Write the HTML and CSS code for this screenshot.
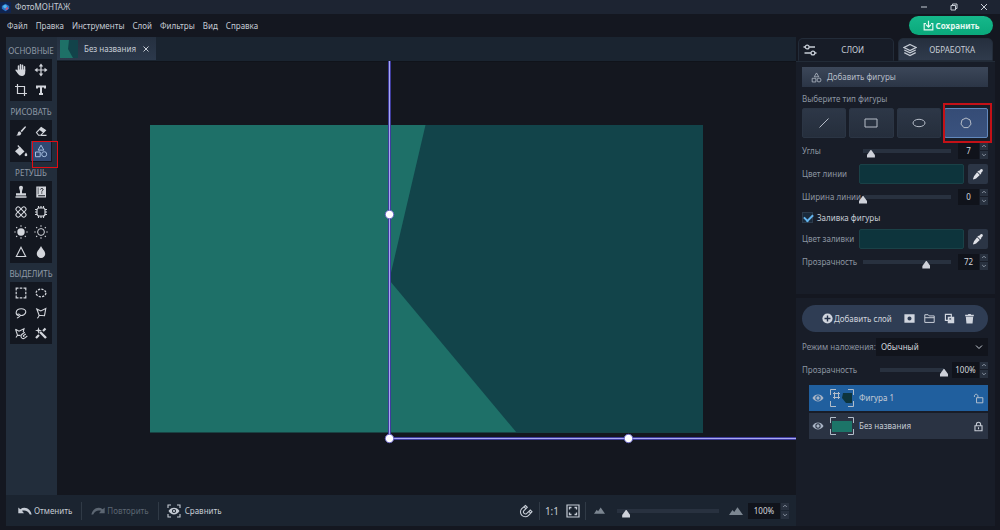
FILE: index.html
```html
<!DOCTYPE html>
<html lang="ru">
<head>
<meta charset="utf-8">
<title>ФотоМОНТАЖ</title>
<link rel="stylesheet" href="styles.css">
</head>
<body>
<svg class="sprite" aria-hidden="true">
  <symbol id="hand" viewBox="0 0 14 14"><g fill="none" stroke="currentColor" stroke-width="1.5" stroke-linecap="round"><path d="M4.5 8V3M6.5 7V1.8M8.5 7V2.2M10.5 8V3.8M4.3 9.8L2.2 7.2"/></g><path fill="currentColor" d="M3.8 6.5h7.4v3c0 2-1.2 3.5-3.2 3.5S4.5 12 3 9z"/></symbol>
  <symbol id="move" viewBox="0 0 14 14"><path d="M7 2v10M2 7h10" stroke="currentColor" stroke-width="1.2"/><path fill="currentColor" d="M7 .5L9.2 3.5H4.8zM7 13.5L4.8 10.5h4.4zM.5 7L3.5 4.8v4.4zM13.5 7l-3 2.2V4.8z"/></symbol>
  <symbol id="crop" viewBox="0 0 14 14"><path d="M3.5 1v9.5H13M1 3.5h9.5V13" fill="none" stroke="currentColor" stroke-width="1.2"/></symbol>
  <symbol id="type" viewBox="0 0 14 14"><path d="M3 5.500V3.500h8v2M7 3.500v7.500M5 11h4" fill="none" stroke="currentColor" stroke-width="2"/></symbol>
  <symbol id="brush" viewBox="0 0 14 14"><path fill="currentColor" d="M11.5 2.2c.8.5.3 1.3-.2 1.9L7.8 8.2 6.5 7l4-4.2c.4-.4.7-.7 1-.6zM5.8 7.5l1.5 1.4c0 2-2 3.1-5 2.5 1.5-.7 1.3-1.6 1.6-2.6.3-.9 1.1-1.4 1.9-1.3z"/></symbol>
  <symbol id="eraser" viewBox="0 0 14 14"><path d="M2.5 8.5l4.7-5 4.3 2.8-4.8 5H4.6zM7 11.4h5.5" fill="none" stroke="currentColor" stroke-width="1.1"/><path fill="currentColor" d="M5.2 5.8l2-2.3 4.3 2.8-2.2 2.4z"/></symbol>
  <symbol id="bucket" viewBox="0 0 14 14"><path fill="currentColor" d="M1 7.2l5-4.4 4.5 4.6-4.7 4.4z"/><path d="M6 4L3.8 1.5" stroke="currentColor" stroke-width="1.2"/><path fill="currentColor" d="M12 8.5c.8 1.3 1.3 1.9 1.3 2.7a1.4 1.4 0 0 1-2.7 0c0-.8.6-1.4 1.4-2.7z"/></symbol>
  <symbol id="shapes" viewBox="0 0 14 14"><g fill="none" stroke="currentColor"><path d="M7 1.2l2.9 4.9H4.1zM1.5 8h4.7v4.7H1.5z"/><circle cx="10.2" cy="10.2" r="2.5"/></g></symbol>
  <symbol id="stamp" viewBox="0 0 14 14"><path fill="currentColor" d="M5 2.7a2 2 0 0 1 4 0L8 6.2v2h4v2.3H2V8.2h4v-2zM1.5 11.3h11v1.4h-11z"/></symbol>
  <symbol id="book" viewBox="0 0 14 14"><path fill="currentColor" fill-rule="evenodd" d="M2.300 1.500h9.700v11H2.300zM4.200 10.300v1h6.800v-1zM3.800 2.500v6.800h.6V2.500z"/><path d="M6.400 4.500c.3-1.500 3-1.200 2.700.2-.1.800-1.300.7-1.300 1.900M7.800 7.400v1.200" fill="none" stroke="#131720"/></symbol>
  <symbol id="patch" viewBox="0 0 14 14"><g fill="none" stroke="currentColor"><rect x=".8" y="4.800" width="12.400" height="4.400" rx="2.200" transform="rotate(45 7 7)"/><rect x=".8" y="4.800" width="12.400" height="4.400" rx="2.200" transform="rotate(-45 7 7)"/></g></symbol>
  <symbol id="chip" viewBox="0 0 14 14"><rect x="3" y="3" width="8" height="8" rx="2" fill="none" stroke="currentColor" stroke-width="1.200"/><path d="M4.500 1v2M7 1v2M9.500 1v2M4.500 11v2M7 11v2M9.500 11v2M1 4.500h2M1 7h2M1 9.500h2M11 4.500h2M11 7h2M11 9.500h2" stroke="currentColor" stroke-width="1.200"/></symbol>
  <symbol id="sun" viewBox="0 0 14 14"><circle cx="7" cy="7" r="3.7" fill="currentColor"/><path d="M7 .3v1.4M7 12.3v1.4M.3 7h1.4M12.3 7h1.4M2.2 2.2l1 1M10.8 10.8l1 1M2.2 11.8l1-1M10.8 3.2l1-1" stroke="currentColor" stroke-width="1.1"/></symbol>
  <symbol id="sun-line" viewBox="0 0 14 14"><circle cx="7" cy="7" r="3.4" fill="none" stroke="currentColor"/><path d="M7 .3v1.4M7 12.3v1.4M.3 7h1.4M12.3 7h1.4M2.2 2.2l1 1M10.8 10.8l1 1M2.2 11.8l1-1M10.8 3.2l1-1" stroke="currentColor" stroke-width="1.1"/></symbol>
  <symbol id="triangle" viewBox="0 0 14 14"><path d="M7 2.3l4.7 9.2H2.3z" fill="none" stroke="currentColor" stroke-width="1.1"/></symbol>
  <symbol id="drop" viewBox="0 0 14 14"><path fill="currentColor" d="M7 1c1.2 3 4.2 4.8 4.2 7.8A4.2 4.2 0 0 1 7 13a4.2 4.2 0 0 1-4.2-4.2C2.8 5.8 5.800 4 7 1z"/></symbol>
  <symbol id="marquee" viewBox="0 0 14 14"><path d="M2.200 4.500V2.200h2.300M9.500 2.200h2.300v2.300M11.800 9.500v2.300H9.500M4.500 11.800H2.200V9.500M5.700 2.200h2.600M5.700 11.800h2.600M2.200 5.700v2.600M11.800 5.700v2.600" fill="none" stroke="currentColor" stroke-width="1.200"/></symbol>
  <symbol id="ellipse-select" viewBox="0 0 14 14"><ellipse cx="7" cy="7" rx="4.900" ry="3.800" fill="none" stroke="currentColor" stroke-width="1.300" stroke-dasharray="2.200 1.200"/></symbol>
  <symbol id="lasso" viewBox="0 0 14 14"><path d="M5 9.500C3 9.200 2 7.900 2.200 6.200 2.500 4 4.700 2.700 7.300 2.700s4.600 1.300 4.500 3.200c-.1 2.300-3 4-5.600 3.500M3.500 8.300c1.500-.9 3.300.4 2.500 1.800-.6 1-2 .6-2.900 2.200" fill="none" stroke="currentColor" stroke-width="1.100"/></symbol>
  <symbol id="poly-lasso" viewBox="0 0 14 14"><path d="M2.800 3l4 2 5-2.500-1.300 7.200-5.400-.5zM5.100 9.200c-.2 1.500-1 2.500-1.800 3" fill="none" stroke="currentColor" stroke-width="1.100"/></symbol>
  <symbol id="magnet-lasso" viewBox="0 0 14 14"><path d="M1.500 3.200l3.500 2 5-2.500-.8 3.500M1.500 3.200l2 6 3 .2M3.500 9.200L2 11.500" fill="none" stroke="currentColor" stroke-width="1.100"/><path d="M10.800 6.300L8 8.300a2.300 2.300 0 0 0 2.600 3.800l2.700-2.100M11.800 8l-2.300 1.600a.7.7 0 0 0 .8 1" fill="none" stroke="currentColor" stroke-width="1.100"/></symbol>
  <symbol id="wand" viewBox="0 0 14 14"><path d="M6 6l6 6" stroke="currentColor" stroke-width="2.400"/><path d="M2 12l3-3M9 5l2.500-2.500" stroke="currentColor" stroke-width="2.200"/><path fill="currentColor" d="M4.500 1l.8 2.700L8 4.500l-2.700.8L4.500 8l-.8-2.700L1 4.500l2.700-.8z"/></symbol>
  <symbol id="settings" viewBox="0 0 14 14"><g fill="none" stroke="currentColor" stroke-width="1.300"><circle cx="4.200" cy="4" r="1.900"/><path d="M6.100 4H12M.5 4h1.800M1.500 10H8M11.800 10h1.700"/><circle cx="9.900" cy="10" r="1.900"/></g></symbol>
  <symbol id="layers" viewBox="0 0 14 14"><path d="M7 1.500l6 3-6 3-6-3zM1.300 7L7 9.900 12.700 7M1.300 9.600L7 12.500l5.700-2.900" fill="none" stroke="currentColor" stroke-width="1.200"/></symbol>
  <symbol id="save" viewBox="0 0 14 14"><path d="M7 1v7.500M4 6l3 3 3-3M3.800 4.500H1.500v8h11v-8h-2.300" fill="none" stroke="currentColor" stroke-width="1.500"/></symbol>
  <symbol id="picker" viewBox="0 0 14 14"><path fill="currentColor" d="M9.200 2.700c1.300-1.900 3.700.2 2.200 1.800L10 6l.3.700-.9.900-3-3 .9-.9.700.2zM6.100 5.300l2.700 2.700-3.700 3.500-2.600 1-.5-.5 1-2.800z"/></symbol>
  <symbol id="plus" viewBox="0 0 14 14"><circle cx="7" cy="7" r="6.500" fill="currentColor"/><path d="M7 3.200v7.600M3.200 7h7.600" stroke="#243149" stroke-width="1.800"/></symbol>
  <symbol id="mask" viewBox="0 0 14 14"><path fill="currentColor" fill-rule="evenodd" d="M.5 1.500h13v11H.5zM7 4.500a2.600 2.600 0 1 0 0 5.200 2.600 2.600 0 0 0 0-5.200z"/></symbol>
  <symbol id="folder" viewBox="0 0 14 14"><path d="M1 12V2.200h4.300l1.300 1.500H13V12zM1 6h12" fill="none" stroke="currentColor" stroke-width="1.200"/></symbol>
  <symbol id="copy" viewBox="0 0 14 14"><path d="M1.800 1.800h7.500v7.500H1.800z" fill="none" stroke="currentColor" stroke-width="1.500"/><path fill="currentColor" fill-rule="evenodd" d="M4.800 4.800H13V13H4.800zM7 6.500v3h3v-3z"/></symbol>
  <symbol id="trash" viewBox="0 0 14 14"><path fill="currentColor" d="M1.500 2.300H5l.5-1h3l.5 1h3.500V4h-11zM2.300 4.800h9.400l-.8 8.500H3.100z"/></symbol>
  <symbol id="eye" viewBox="0 0 14 14"><path fill="currentColor" fill-rule="evenodd" d="M.5 7C3.700 1.600 10.300 1.600 13.500 7 10.300 12.400 3.700 12.400.5 7zM7 3.900a3.100 3.100 0 1 0 0 6.200 3.100 3.100 0 0 0 0-6.200z"/><circle cx="7" cy="7" r="1.900" fill="currentColor"/></symbol>
  <symbol id="unlock" viewBox="0 0 14 14"><path d="M4.500 6h8v6.500h-8zM6.300 6V4C6 .9 2.200.9 1.800 3.700V5" fill="none" stroke="currentColor" stroke-width="1.100"/></symbol>
  <symbol id="lock" viewBox="0 0 14 14"><path d="M2.500 6h9v6.500h-9zM4.300 6V4.300C4.300.6 9.700.6 9.700 4.300V6M7 8v2.500" fill="none" stroke="currentColor" stroke-width="1.400"/></symbol>
  <symbol id="undo" viewBox="0 0 14 14"><path fill="currentColor" d="M.3 3.500l2 1.700c3.900-2.900 9.700-1.400 11.400 5.300h-1.900C10.300 6.700 6.600 5.700 4 6.800L6 9.200H.3z"/></symbol>
  <symbol id="compare" viewBox="0 0 14 14"><path d="M1 4V1h3M10 1h3v3M13 10v3h-3M4 13H1v-3" fill="none" stroke="currentColor" stroke-width="1.100"/><path fill="currentColor" fill-rule="evenodd" d="M1.500 7c2.700-4.500 8.300-4.500 11 0-2.700 4.500-8.300 4.500-11 0zM7 4.900a2.100 2.100 0 1 0 0 4.200 2.100 2.100 0 0 0 0-4.200z"/><circle cx="7" cy="7" r="1.100" fill="currentColor"/></symbol>
  <symbol id="magnet" viewBox="0 0 14 14"><path d="M6.500 1.500L2.800 4.700A4.700 4.700 0 0 0 9.600 11.300L13 7.700 11.300 6 7.800 9.300A1.900 1.900 0 0 1 5 6.700L8.300 3.300zM5.100 2.800L6.900 4.700M9.900 7.300l1.800 1.800" fill="none" stroke="currentColor" stroke-width="1.100"/></symbol>
  <symbol id="fit" viewBox="0 0 14 14"><path d="M1 1h12v12H1z" fill="none" stroke="currentColor" stroke-width="1.200"/><path d="M3.500 5.500v-2h2M8.500 3.500h2v2M10.500 8.500v2h-2M5.500 10.500h-2v-2" fill="none" stroke="currentColor" stroke-width="1.300"/></symbol>
  <symbol id="mountain" viewBox="0 0 14 14"><path fill="currentColor" d="M0 11l3.500-5 1.700 2L8.500 3.200 14 11z"/></symbol>
  <symbol id="chev-up" viewBox="0 0 8 6"><path d="M2.200 4L4 2.200 5.800 4" fill="none" stroke="currentColor"/></symbol>
  <symbol id="chev-down" viewBox="0 0 8 6"><path d="M2.200 2L4 3.800 5.800 2" fill="none" stroke="currentColor"/></symbol>
</svg>

<div class="app">
  <header class="titlebar">
    <svg class="logo" viewBox="0 0 12 12"><rect width="12" height="12" fill="#102450"/><path fill="#2874c9" d="M6 2l4 2.300v3L6 10 2 7.300v-3z"/><circle cx="5.500" cy="5" r="2" fill="#54b8ef"/><path fill="#c2597e" d="M6 6.500l2.500-1 .5 2L6.500 9z"/></svg>
    <span class="app-name">ФотоМОНТАЖ</span>
    <div class="window-buttons">
      <button aria-label="Свернуть"><svg viewBox="0 0 8 8"><path d="M1 4h6"/></svg></button>
      <button aria-label="Развернуть"><svg viewBox="0 0 8 8"><path d="M1 2.500h4.500v4.500H1zM2.500 2.500V1H7v4.500H5.500"/></svg></button>
      <button aria-label="Закрыть"><svg viewBox="0 0 8 8"><path d="M1 1l6 6M7 1L1 7"/></svg></button>
    </div>
  </header>

  <div class="menubar">
    <nav class="menu">
      <button>Файл</button><button>Правка</button><button>Инструменты</button><button>Слой</button><button>Фильтры</button><button>Вид</button><button>Справка</button>
    </nav>
    <button class="save"><svg class="icon small"><use href="#save"/></svg>Сохранить</button>
  </div>

  <div class="workspace">
    <main class="editor">
      <aside class="tools">
        <h2>ОСНОВНЫЕ</h2>
        <div class="tool-group">
          <button aria-label="Рука"><svg class="icon"><use href="#hand"/></svg></button>
          <button aria-label="Перемещение"><svg class="icon"><use href="#move"/></svg></button>
          <button aria-label="Кадрирование"><svg class="icon"><use href="#crop"/></svg></button>
          <button aria-label="Текст"><svg class="icon"><use href="#type"/></svg></button>
        </div>
        <h2>РИСОВАТЬ</h2>
        <div class="tool-group">
          <button aria-label="Кисть"><svg class="icon"><use href="#brush"/></svg></button>
          <button aria-label="Ластик"><svg class="icon"><use href="#eraser"/></svg></button>
          <button aria-label="Заливка"><svg class="icon"><use href="#bucket"/></svg></button>
          <button class="active highlighted" aria-label="Фигуры"><svg class="icon"><use href="#shapes"/></svg></button>
        </div>
        <h2>РЕТУШЬ</h2>
        <div class="tool-group">
          <button aria-label="Штамп"><svg class="icon"><use href="#stamp"/></svg></button>
          <button aria-label="Архивная кисть"><svg class="icon"><use href="#book"/></svg></button>
          <button aria-label="Лечащая кисть"><svg class="icon"><use href="#patch"/></svg></button>
          <button aria-label="Заплатка"><svg class="icon"><use href="#chip"/></svg></button>
          <button aria-label="Осветлить"><svg class="icon"><use href="#sun"/></svg></button>
          <button aria-label="Затемнить"><svg class="icon"><use href="#sun-line"/></svg></button>
          <button aria-label="Резкость"><svg class="icon"><use href="#triangle"/></svg></button>
          <button aria-label="Размытие"><svg class="icon"><use href="#drop"/></svg></button>
        </div>
        <h2>ВЫДЕЛИТЬ</h2>
        <div class="tool-group">
          <button aria-label="Прямоугольник"><svg class="icon"><use href="#marquee"/></svg></button>
          <button aria-label="Эллипс"><svg class="icon"><use href="#ellipse-select"/></svg></button>
          <button aria-label="Лассо"><svg class="icon"><use href="#lasso"/></svg></button>
          <button aria-label="Многоугольное лассо"><svg class="icon"><use href="#poly-lasso"/></svg></button>
          <button aria-label="Магнитное лассо"><svg class="icon"><use href="#magnet-lasso"/></svg></button>
          <button aria-label="Волшебная палочка"><svg class="icon"><use href="#wand"/></svg></button>
        </div>
      </aside>

      <section class="document">
        <div class="doc-tabs">
          <div class="doc-tab">
            <svg class="doc-thumb" viewBox="0 0 18 18" preserveAspectRatio="none"><path fill="#1e7067" d="M0 0h18v18H0z"/><path fill="#12434a" d="M9 0h9v18h-5L8 9z"/></svg>
            <span>Без названия</span>
            <button aria-label="Закрыть вкладку"><svg viewBox="0 0 8 8"><path d="M1.500 1.500l5 5M6.500 1.500l-5 5"/></svg></button>
          </div>
        </div>
        <div class="canvas">
          <svg viewBox="0 0 739 434" preserveAspectRatio="xMidYMid slice" role="img" aria-label="Холст">
            <rect x="93" y="64" width="553" height="307.500" fill="#1e7068"/>
            <path fill="#12444a" d="M368.500 64H646v307.500H459.500L333 220v-4z"/>
            <path class="frame-edge" d="M332.500 0v377.500H739"/>
            <path class="frame" d="M332.500 0v377.500H739"/>
            <g class="handles"><circle cx="332.500" cy="153.500" r="4.200"/><circle cx="332.500" cy="377.500" r="4.200"/><circle cx="571.500" cy="377.500" r="4.200"/></g>
          </svg>
        </div>
      </section>

      <footer class="statusbar">
        <div class="history">
          <button><svg class="icon"><use href="#undo"/></svg>Отменить</button>
          <button disabled><svg class="icon mirrored"><use href="#undo"/></svg>Повторить</button>
          <button class="compare"><svg class="icon"><use href="#compare"/></svg>Сравнить</button>
        </div>
        <div class="zoom">
          <button class="snap" aria-label="Привязка"><svg class="icon"><use href="#magnet"/></svg></button>
          <div class="scale">
            <button class="ratio">1:1</button>
            <button aria-label="Вписать"><svg class="icon"><use href="#fit"/></svg></button>
          </div>
          <svg class="icon small dim"><use href="#mountain"/></svg>
          <input class="slider" type="range" min="0" max="100" value="9" aria-label="Масштаб">
          <svg class="icon dim"><use href="#mountain"/></svg>
          <span class="stepper"><input type="text" value="100%" aria-label="Масштаб, проценты"><span class="steps"><button aria-label="Больше"><svg><use href="#chev-up"/></svg></button><button aria-label="Меньше"><svg><use href="#chev-down"/></svg></button></span></span>
        </div>
      </footer>
    </main>

    <aside class="side">
      <div class="side-tabs">
        <button class="current"><svg class="icon"><use href="#settings"/></svg><span>СЛОИ</span></button>
        <button><svg class="icon"><use href="#layers"/></svg><span>ОБРАБОТКА</span></button>
      </div>

      <section class="panel shape-panel">
        <div class="add-shape"><svg class="icon small"><use href="#shapes"/></svg>Добавить фигуры</div>
        <p class="caption">Выберите тип фигуры</p>
        <div class="shape-types">
          <button aria-label="Линия"><svg viewBox="0 0 16 12"><path d="M3.500 10.500l9-9"/></svg></button>
          <button aria-label="Прямоугольник"><svg viewBox="0 0 16 12"><path d="M2 2h12v8H2z"/></svg></button>
          <button aria-label="Эллипс"><svg viewBox="0 0 16 12"><ellipse cx="8" cy="6" rx="6" ry="3.700"/></svg></button>
          <button class="chosen" aria-label="Многоугольник"><svg viewBox="0 0 16 12"><path d="M8 1l4 1.900 1 4.200L10.200 10.600H5.800L3 7.100l1-4.200z"/></svg></button>
        </div>
        <div class="row"><label for="angles">Углы</label>
          <input class="slider" id="angles" type="range" min="0" max="100" value="9">
          <span class="stepper"><input type="text" value="7" aria-label="Углы, значение"><span class="steps"><button aria-label="Больше"><svg><use href="#chev-up"/></svg></button><button aria-label="Меньше"><svg><use href="#chev-down"/></svg></button></span></span>
        </div>
        <div class="row"><label for="line-color">Цвет линии</label>
          <button class="swatch" id="line-color"></button>
          <button class="pick" aria-label="Пипетка"><svg class="icon"><use href="#picker"/></svg></button>
        </div>
        <div class="row"><label for="line-width">Ширина линии</label>
          <input class="slider" id="line-width" type="range" min="0" max="100" value="0">
          <span class="stepper"><input type="text" value="0" aria-label="Ширина линии, значение"><span class="steps"><button aria-label="Больше"><svg><use href="#chev-up"/></svg></button><button aria-label="Меньше"><svg><use href="#chev-down"/></svg></button></span></span>
        </div>
        <div class="check"><input type="checkbox" id="fill" checked><label for="fill">Заливка фигуры</label></div>
        <div class="row"><label for="fill-color">Цвет заливки</label>
          <button class="swatch" id="fill-color"></button>
          <button class="pick" aria-label="Пипетка"><svg class="icon"><use href="#picker"/></svg></button>
        </div>
        <div class="row"><label for="fill-opacity">Прозрачность</label>
          <input class="slider" id="fill-opacity" type="range" min="0" max="100" value="72">
          <span class="stepper"><input type="text" value="72" aria-label="Прозрачность, значение"><span class="steps"><button aria-label="Больше"><svg><use href="#chev-up"/></svg></button><button aria-label="Меньше"><svg><use href="#chev-down"/></svg></button></span></span>
        </div>
      </section>

      <section class="panel layer-panel">
        <div class="layer-actions">
          <button class="add-layer"><svg class="icon small"><use href="#plus"/></svg>Добавить слой</button>
          <button aria-label="Маска"><svg class="icon small"><use href="#mask"/></svg></button>
          <button aria-label="Группа"><svg class="icon small"><use href="#folder"/></svg></button>
          <button aria-label="Копировать"><svg class="icon small"><use href="#copy"/></svg></button>
          <button aria-label="Удалить"><svg class="icon small"><use href="#trash"/></svg></button>
        </div>
        <div class="row wide"><label for="blend">Режим наложения:</label>
          <div class="select"><select id="blend"><option>Обычный</option></select><svg viewBox="0 0 8 6"><path d="M1 1.500l3 3 3-3"/></svg></div>
        </div>
        <div class="row wide"><label for="layer-opacity">Прозрачность</label>
          <input class="slider" id="layer-opacity" type="range" min="0" max="100" value="100">
          <span class="stepper percent"><input type="text" value="100%" aria-label="Прозрачность слоя, значение"><span class="steps"><button aria-label="Больше"><svg><use href="#chev-up"/></svg></button><button aria-label="Меньше"><svg><use href="#chev-down"/></svg></button></span></span>
        </div>
        <ul class="layers">
          <li class="selected">
            <svg class="icon eye"><use href="#eye"/></svg>
            <svg class="thumb" viewBox="0 0 24 18"><path fill="#0d343c" d="M13 4h9v10h-6l-4-5z"/><path class="mark" d="M4.500 4.500h4v4h-4zM3 4.500h7M3 8.500h7M4.500 3v7M8.500 3v7"/><path class="corners" d="M.5 6V.5H6M18 .5h5.500V6M23.500 12v5.500H18M6 17.500H.5V12"/></svg>
            <span>Фигура 1</span>
            <button aria-label="Заблокировать"><svg class="icon small"><use href="#unlock"/></svg></button>
          </li>
          <li>
            <svg class="icon eye"><use href="#eye"/></svg>
            <svg class="thumb" viewBox="0 0 24 18"><path fill="#1c7468" d="M2 4h20v11H2z"/><path class="corners" d="M.5 6V.5H6M18 .5h5.500V6M23.500 12v5.500H18M6 17.500H.5V12"/></svg>
            <span>Без названия</span>
            <button aria-label="Разблокировать"><svg class="icon small"><use href="#lock"/></svg></button>
          </li>
        </ul>
      </section>
    </aside>
  </div>
</div>
</body>
</html>
```

FILE: styles.css
```css
* { box-sizing: border-box; }

body {
  margin: 0;
  background: #141720;
  color: #c6ccd5;
  font: 8px/12px "Noto Sans", "Open Sans", sans-serif;
}

button, input, select {
  margin: 0;
  padding: 0;
  border: 0;
  background: none;
  color: inherit;
  font: inherit;
}

button { display: flex; align-items: center; justify-content: center; }
h2, p, ul { margin: 0; padding: 0; font-weight: 400; }
svg { display: block; flex: none; }

.sprite { display: none; }
.icon { width: 14px; height: 14px; }
.icon.small { width: 11px; height: 11px; }
.icon.dim { color: #7c8691; }
.mirrored { transform: scaleX(-1); }

.app { display: flex; flex-direction: column; min-height: 100vh; }

.titlebar {
  display: flex;
  align-items: center;
  gap: 4px;
  height: 14px;
  background: #1d2432;
}

.logo { width: 11px; height: 11px; }
.app-name { flex: 1; }
.window-buttons { display: flex; gap: 22px; padding-right: 12px; }

.window-buttons svg, .doc-tab button svg {
  width: 8px;
  height: 8px;
  fill: none;
  stroke: currentColor;
  stroke-width: 1;
}

.menubar {
  display: flex;
  align-items: center;
  justify-content: space-between;
  height: 23px;
  padding: 0 7px;
}

.menu { display: flex; gap: 8px; }

.save {
  gap: 2px;
  width: 84px;
  height: 19px;
  border-radius: 10px;
  background: linear-gradient(#16b88b, #0aa87b);
  color: #e3f8f1;
  font-weight: 700;
}

.workspace {
  flex: 1;
  display: grid;
  grid-template-columns: 1fr 199px;
  padding: 0 5px 4px 6px;
}

.editor {
  display: grid;
  grid-template-columns: 51px 1fr;
  grid-template-rows: 1fr 31px;
  min-width: 0;
}

.tools {
  padding: 7px 5px 0 4px;
  background: #222d3b;
}

.tools h2 {
  margin: 0 -4px 1px;
  padding: 1px 0;
  color: #8f99a6;
  font-size: 8px;
  line-height: 12px;
  text-align: center;
}

.tool-group {
  display: grid;
  grid-template-columns: 1fr 1fr;
  grid-auto-rows: 20px;
  margin-bottom: 4px;
  padding: 1px;
  background: #131720;
  color: #d3d6dc;
}

.tool-group button { position: relative; }
.tool-group .active { background: #304872; color: #a4bdde; }

.highlighted::after {
  content: "";
  position: absolute;
  z-index: 1;
  inset: 0 -7px -7px 1px;
  border: 1px solid #e00d14;
}

.document { display: flex; flex-direction: column; min-width: 0; }
.doc-tabs { height: 24px; background: #1a2430; }

.doc-tab {
  display: flex;
  align-items: center;
  width: 99px;
  height: 23px;
  padding: 0 6px 0 3px;
  background: linear-gradient(#253040, #2c394b);
}

.doc-thumb { width: 18px; height: 18px; }
.doc-tab span { flex: 1; padding-left: 6px; white-space: nowrap; }

.canvas {
  position: relative;
  flex: 1;
  border-top: 1px solid #10131a;
  background: #14171f;
}

.canvas svg { position: absolute; inset: -1px 0 0; width: 100%; height: calc(100% + 1px); }
.frame-edge, .frame { fill: none; stroke: #3f3c9c; stroke-width: 3; }
.frame { stroke: #a8a8f0; stroke-width: 1; }
.handles { fill: #fff; stroke: #6a66c4; stroke-width: 1; }

.statusbar {
  grid-column: 1 / -1;
  display: flex;
  align-items: center;
  justify-content: space-between;
  padding: 0 7px 0 12px;
  background: #1b2430;
}

.history, .zoom, .scale { display: flex; align-items: center; }
.history button { gap: 2px; height: 18px; padding: 0 9px 0 0; }
.history button + button { padding-left: 9px; border-left: 1px solid #303a46; }
.history button:disabled { color: #5c6672; }
.history .compare { gap: 4px; padding-left: 8px; }
.zoom .snap { padding-right: 6px; }

.scale {
  gap: 7px;
  height: 18px;
  margin-right: 8px;
  padding: 0 5px;
  border: 1px solid #303a46;
  border-width: 0 1px;
}

.ratio { font-size: 10px; }
.zoom .slider { width: 110px; margin: 0 6px 0 8px; }
.zoom .stepper { width: 41px; margin-left: 5px; }

/* Range control: thin rail with a pentagonal grip hanging below it */
.slider {
  -webkit-appearance: none;
  appearance: none;
  width: 100%;
  min-width: 0;
  height: 16px;
  background: linear-gradient(#28313f, #28313f) center / calc(100% - 8px) 4px no-repeat;
}

.slider::-webkit-slider-runnable-track { height: 16px; }

.slider::-webkit-slider-thumb {
  -webkit-appearance: none;
  width: 8px;
  height: 8px;
  margin-top: 7px;
  background: #ced1d9;
  clip-path: polygon(50% 0, 100% 70%, 100% 100%, 0 100%, 0 70%);
}

.stepper { display: flex; gap: 1px; width: 30px; height: 16px; }

.stepper input {
  flex: 1;
  width: 0;
  background: #10131b;
  color: #d5d8de;
  text-align: center;
}

.steps { display: grid; gap: 1px; width: 8px; }
.steps button { background: #28313f; color: #8993a1; }
.steps svg { width: 8px; height: 6px; }

.side { display: flex; flex-direction: column; gap: 4px; min-width: 0; }

.side-tabs {
  display: grid;
  grid-template-columns: 1fr 1fr;
  gap: 4px;
  margin-bottom: -4px;
  padding: 1px 2px 0;
}

.side-tabs button {
  height: 23px;
  padding: 0 4px;
  border: 1px solid #232c39;
  border-radius: 5px 5px 0 0;
  background: linear-gradient(#252f3e, #303b4c);
}

.side-tabs .current { border-bottom-color: transparent; background: #171c27; }
.side-tabs span { flex: 1; }

.panel { padding: 6px 7px 0 6px; background: #181d28; }
.shape-panel { min-height: 233px; padding-top: 5px; border-top: 1px solid #222b37; }
.layer-panel { flex: 1; padding-top: 7px; }

.add-shape {
  display: flex;
  align-items: center;
  gap: 5px;
  height: 20px;
  padding-left: 9px;
  background: linear-gradient(#3c4759, #2b3546);
  color: #b5bdc8;
}

.caption, .row label { color: #8c95a1; }
.caption { padding: 6px 0 3px; }

.shape-types {
  display: grid;
  grid-template-columns: repeat(4, 1fr);
  gap: 3px;
  margin-bottom: 1px;
}

.shape-types button {
  position: relative;
  height: 30px;
  border: 1px solid #2b3544;
  border-radius: 2px;
  background: linear-gradient(#2d3747, #252e3c);
}

.shape-types svg { width: 16px; height: 12px; fill: none; stroke: #b6bdc8; }
.shape-types .chosen { border-color: #6289bd; background: linear-gradient(#354c76, #3a527e); }

.shape-types .chosen::after {
  content: "";
  position: absolute;
  inset: -6px -5px -6px -2px;
  border: 2px solid #c41117;
}

.row {
  display: grid;
  grid-template-columns: 57px 1fr 30px;
  align-items: center;
  height: 23px;
}

.row label { white-space: nowrap; }
.row > .slider { width: 96px; }
.row > .stepper { justify-self: end; }
.row:has(.swatch) { grid-template-columns: 57px 1fr 20px; column-gap: 0; }

.swatch {
  height: 20px;
  margin-right: 4px;
  border: 1px solid #1a4147;
  border-radius: 2px;
  background: #0d343c;
}

.pick { height: 20px; border-radius: 2px; background: #2b3545; color: #e0e2e8; }

.check { display: flex; align-items: center; gap: 4px; height: 19px; }

.check input {
  -webkit-appearance: none;
  appearance: none;
  position: relative;
  width: 11px;
  height: 11px;
  border: 1px solid #2c3b4c;
  background: #1a2a3b;
}

.check input:checked::after {
  content: "";
  position: absolute;
  inset: 0 2px 2px 1px;
  width: 7px;
  height: 4px;
  border: solid #64b5ef;
  border-width: 0 0 2px 2px;
  transform: translateY(1px) rotate(-45deg);
}

.layer-actions {
  display: flex;
  align-items: center;
  gap: 9px;
  height: 27px;
  margin-bottom: 3px;
  padding: 0 13px 0 20px;
  border-radius: 14px;
  background: #2f3d54;
  color: #d0d5de;
}

.add-layer { gap: 1px; margin-right: auto; }

.row.wide { grid-template-columns: 74px 1fr 36px; }
.row.wide > .slider { width: 72px; }
.row.wide > .stepper { width: 36px; }
.row.wide .select { grid-column: 2 / -1; }

.select { position: relative; }

.select select {
  -webkit-appearance: none;
  appearance: none;
  width: 100%;
  height: 18px;
  padding: 0 16px 0 5px;
  background: #11141c;
  color: #d3d6dc;
}

.select svg {
  position: absolute;
  top: 6px;
  right: 5px;
  width: 8px;
  height: 6px;
  fill: none;
  stroke: currentColor;
  pointer-events: none;
}

.layers { display: grid; gap: 2px; padding: 4px 0 0 7px; list-style: none; }

.layers li {
  display: flex;
  align-items: center;
  height: 26px;
  padding: 0 4px 0 3px;
  background: #2a3343;
}

.layers .selected { background: #205f9e; }
.layers span { flex: 1; padding-left: 5px; }
.eye { margin-right: 6px; color: #a9b4c5; }
.layers .eye { width: 12px; height: 12px; }
.thumb { width: 24px; height: 18px; }
.corners, .mark { fill: none; stroke: #b2bdc9; }
```
